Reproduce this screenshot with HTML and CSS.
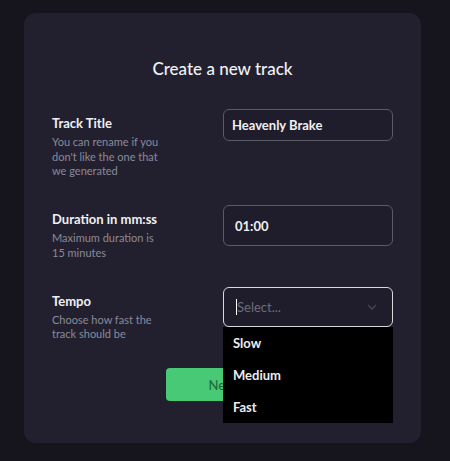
FILE: index.html
```html
<!DOCTYPE html>
<html>
<head>
<meta charset="utf-8">
<link rel="stylesheet" href="styles.css">
</head>
<body>
<div class="card">
  <h1 class="title">Create a new track</h1>
  <div class="row">
    <div class="label">
      <div class="name">Track Title</div>
      <div class="desc">You can rename if you<br>don't like the one that<br>we generated</div>
    </div>
    <div class="field input">Heavenly Brake</div>
  </div>
  <div class="row">
    <div class="label">
      <div class="name">Duration in mm:ss</div>
      <div class="desc">Maximum duration is<br>15 minutes</div>
    </div>
    <div class="field input tall">01:00</div>
  </div>
  <div class="row">
    <div class="label">
      <div class="name">Tempo</div>
      <div class="desc">Choose how fast the<br>track should be</div>
    </div>
    <div class="select-wrap">
      <div class="field select">
        <span class="caret"></span><span class="placeholder">Select...</span>
        <svg class="chev" width="10" height="6" viewBox="0 0 10 6"><path d="M1 1 L5 5 L9 1" fill="none" stroke="currentColor" stroke-width="1.5"/></svg>
      </div>
      <div class="menu">
        <div class="opt">Slow</div>
        <div class="opt">Medium</div>
        <div class="opt">Fast</div>
      </div>
    </div>
  </div>
  <div class="actions">
    <button class="btn">Next</button>
  </div>
</div>
</body>
</html>
```

FILE: styles.css
```css
html, body {
  margin: 0;
  padding: 0;
  background: #16151e;
  font-family: "Lato", "Noto Sans", sans-serif;
}
body {
  width: 450px;
  height: 461px;
  overflow: hidden;
  padding-top: 13px;
  box-sizing: border-box;
}
.card {
  margin-left: 24px;
  width: 397px;
  height: 430px;
  box-sizing: border-box;
  background: #22202f;
  border-radius: 12px;
  padding: 45px 28px 0 28px;
}
.title {
  margin: 0 0 29px 0;
  text-align: center;
  font-size: 17px;
  line-height: 22px;
  font-weight: 500;
  color: #f2f2f5;
}
.row {
  display: flex;
  justify-content: space-between;
  align-items: flex-start;
  margin-bottom: 26.5px;
}
.label {
  padding-top: 5px;
}
.name {
  font-size: 13px;
  line-height: 18px;
  font-weight: 700;
  color: #f0f0f3;
}
.desc {
  margin-top: 3px;
  font-size: 11px;
  line-height: 14.5px;
  color: #8b8a98;
}
.field {
  width: 170px;
  box-sizing: border-box;
  border-radius: 6px;
  display: flex;
  align-items: center;
  background: #1f1d2b;
}
.input {
  height: 32px;
  border: 1px solid #5b5a67;
  padding-left: 8px;
  font-size: 13px;
  font-weight: 700;
  color: #f0f0f3;
}
.input.tall {
  height: 41px;
  padding-left: 11px;
}
.select-wrap {
  position: relative;
}
.select {
  height: 40px;
  border: 1px solid #d8d8de;
  padding-left: 12px;
  padding-right: 15px;
  font-size: 13px;
}
.caret {
  width: 1px;
  height: 16px;
  background: #ffffff;
}
.placeholder {
  color: #6d6c7a;
  flex: 1;
}
.chev {
  color: #43424f;
}
.menu {
  position: absolute;
  top: 100%;
  left: 0;
  width: 170px;
  background: #000000;
  z-index: 2;
}
.opt {
  height: 32px;
  display: flex;
  align-items: center;
  padding-left: 10px;
  font-size: 13px;
  font-weight: 700;
  color: #ececef;
}
.actions {
  display: flex;
  justify-content: center;
}
.btn {
  width: 113px;
  height: 33px;
  border: none;
  border-radius: 4px;
  background: #47c975;
  color: #1f6b3a;
  font-family: inherit;
  font-size: 13px;
  font-weight: 500;
}
```
